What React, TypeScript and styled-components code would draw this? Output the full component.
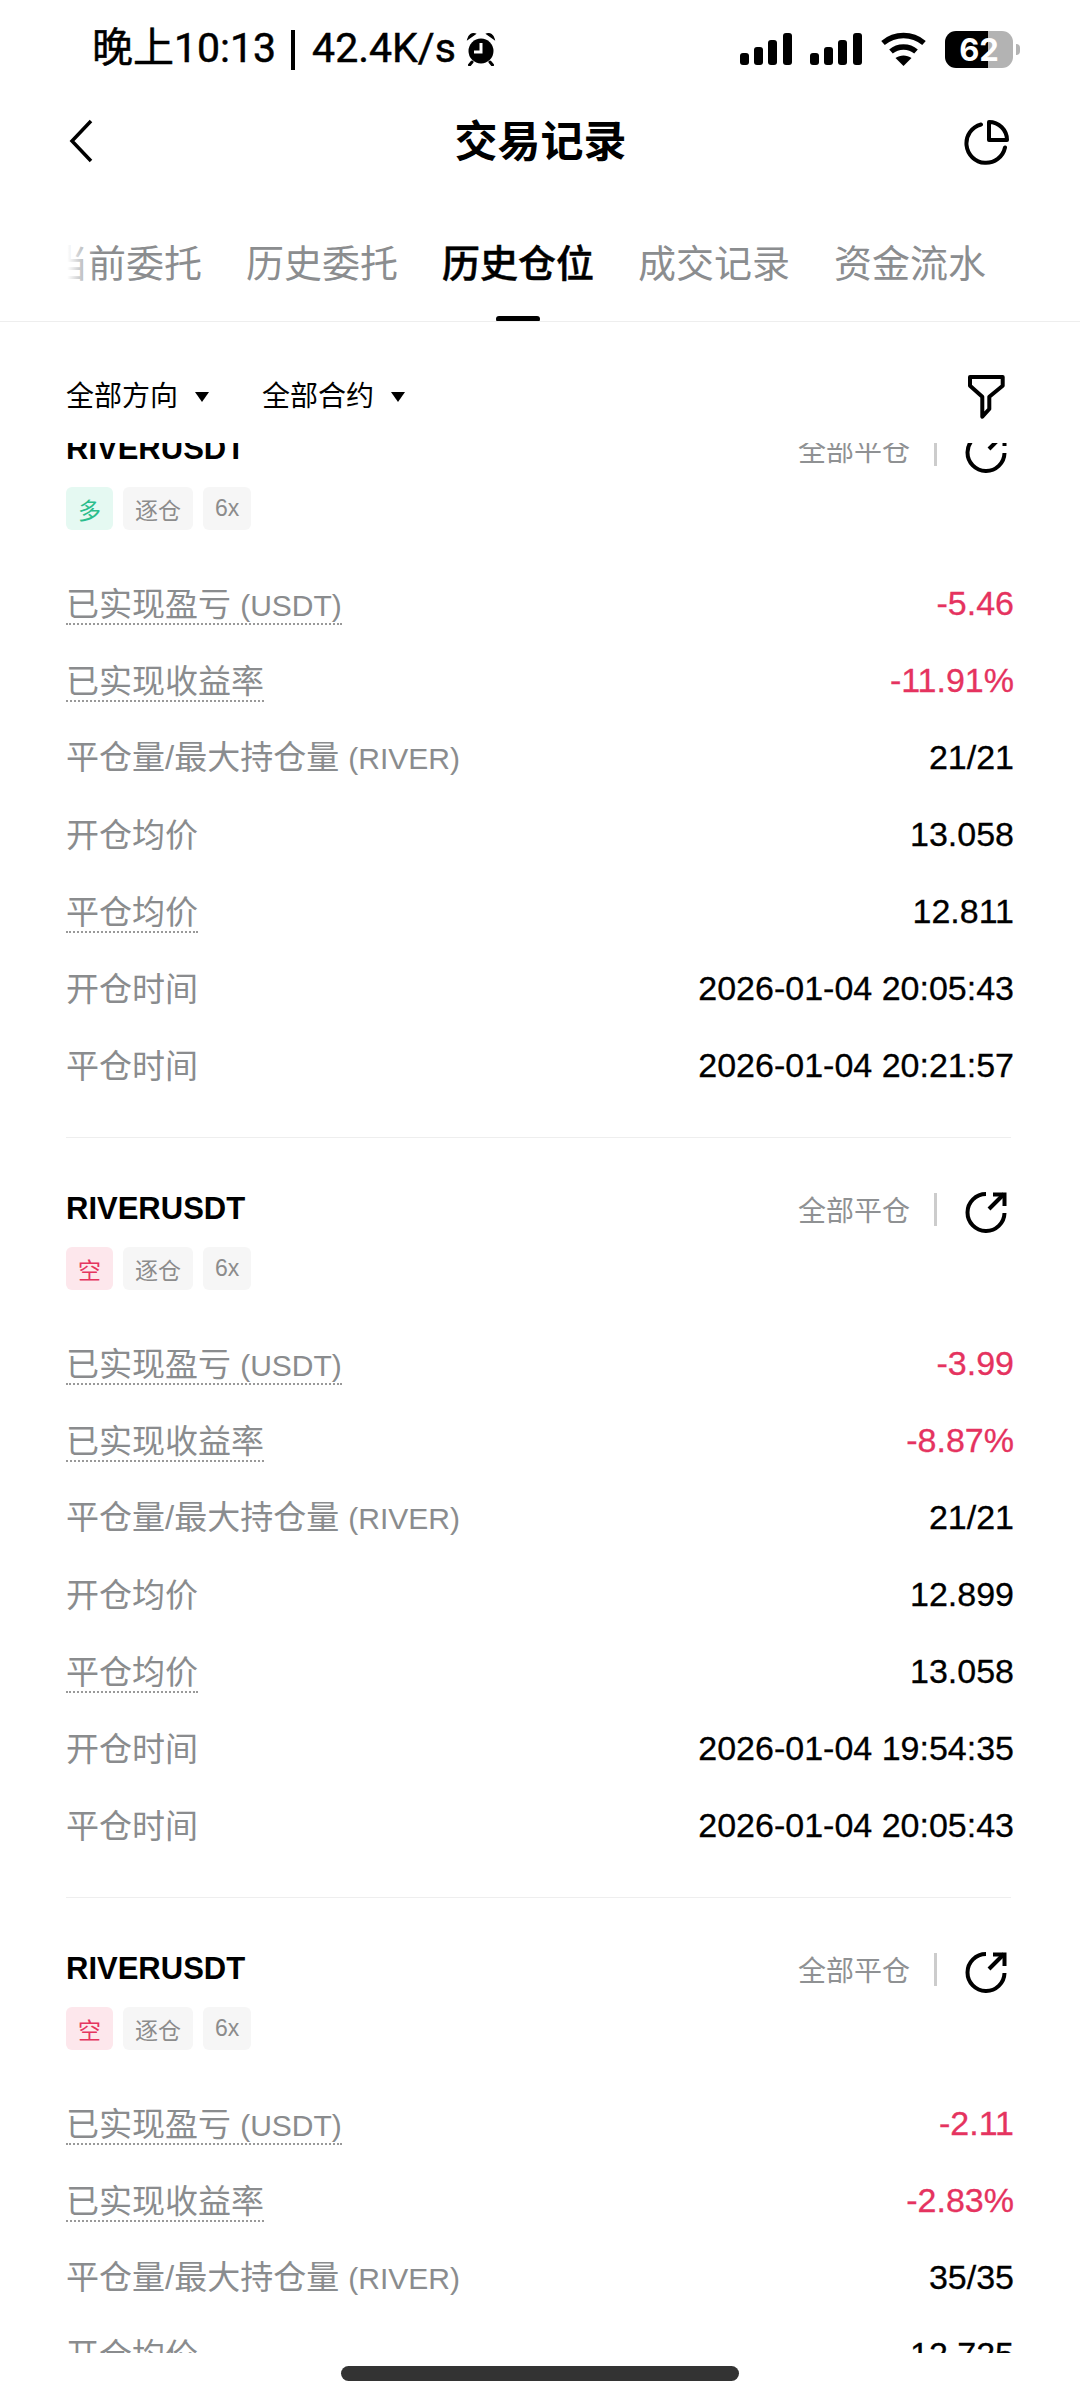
import React from "react";
import styled, { createGlobalStyle } from "styled-components";

const Global = createGlobalStyle`
  html, body { margin: 0; padding: 0; background: #fff; }
  body { font-family: "Liberation Sans", "Noto Sans CJK SC", sans-serif; color: #000; }
  * { box-sizing: border-box; }
`;

const Page = styled.div`
  width: 1080px; height: 2400px; background: #fff; display: flex; flex-direction: column; overflow: hidden;
`;
const StatusBar = styled.div`
  height: 98px; display: flex; align-items: center; justify-content: space-between;
  padding: 0 60px 0 92px; flex: none;
`;
const StatusLeft = styled.div`display: flex; align-items: center; gap: 10px;`;
const StatusText = styled.div`
  display: flex; align-items: center; font-family: Roboto, "Noto Sans CJK SC", sans-serif;
  font-size: 41px; line-height: 48px; font-weight: 400; -webkit-text-stroke: .5px #000; white-space: nowrap; padding-bottom: 2px;
`;
const StatusSep = styled.span`width: 4px; height: 40px; background: #000; margin: 4px 17px 0 15px;`;
const StatusRight = styled.div`display: flex; align-items: center; gap: 18px;`;
const Battery = styled.div`
  width: 68px; height: 37px; border-radius: 11px; display: flex;
  align-items: center; justify-content: center;
  background: linear-gradient(90deg, #000 0 63%, #b3b3b3 63% 100%);
  color: #fff; font-family: Inter, sans-serif; font-weight: 700; font-size: 31px; line-height: 1;
`;
const BatteryWrap = styled.div`display: flex; align-items: center; gap: 3px;`;
const BatteryTip = styled.div`width: 4px; height: 11px; border-radius: 0 4px 4px 0; background: #b3b3b3;`;

const NavBar = styled.div`
  height: 90px; flex: none; display: flex; align-items: center; justify-content: space-between; padding: 0 71px 0 68px;
`;
const NavSide = styled.div<{ $end?: boolean }>`
  width: 46px; display: flex; justify-content: ${p => (p.$end ? "flex-end" : "flex-start")};
  padding-bottom: ${p => (p.$end ? "2px" : "4px")};
`;
const NavTitle = styled.div`font-size: 43px; line-height: 56px; font-weight: 700; padding-bottom: 2px; margin-left: 4px;`;

const Tabs = styled.div`
  position: relative; height: 134px; flex: none; display: flex; gap: 44px; padding: 54px 0 0 50px;
  border-bottom: 1px solid #eeeeee; overflow: hidden;
`;
const Tab = styled.div<{ $active?: boolean }>`
  position: relative; height: 80px; font-size: 38px; line-height: 44px; white-space: nowrap;
  color: ${p => (p.$active ? "#000" : "#8b8d8f")};
  font-weight: ${p => (p.$active ? 500 : 400)};
  -webkit-text-stroke: ${p => (p.$active ? ".5px #000" : "0")};
  ${p => p.$active ? `
    &::after {
      content: ""; position: absolute; left: 54px; bottom: 0; width: 44px; height: 6px; border-radius: 3px; background: #000;
    }` : ""}
`;
const TabFade = styled.div`
  position: absolute; left: 0; top: 0; bottom: 0; width: 96px;
  background: linear-gradient(90deg, #fff 0 70%, rgba(255,255,255,0) 100%);
`;

const FilterBar = styled.div`
  height: 121px; flex: none; display: flex; align-items: center; padding: 28px 74px 0 66px;
`;
const FilterItem = styled.div`
  display: flex; align-items: center; gap: 17px; font-size: 28px; line-height: 1; margin-right: 53px;
`;
const Caret = styled.span`
  width: 0; height: 0; border-left: 7px solid transparent; border-right: 7px solid transparent; border-top: 10px solid #000;
`;
const FilterIcon = styled.div`margin-left: auto; display: flex;`;

const List = styled.div`height: 1910px; flex: none; overflow: hidden;`;
const ListInner = styled.div`margin-top: -66px;`;
const Card = styled.div`
  margin: 0 69px 0 66px; padding: 41px 0 32px; border-top: 1px solid #eeeeee;
`;
const CardHead = styled.div`height: 60px; display: flex; align-items: center;`;
const Symbol = styled.div`font-size: 31px; font-weight: 700;`;
const HeadRight = styled.div`margin-left: auto; display: flex; align-items: center;`;
const CloseText = styled.span`font-size: 28px; color: #8f9193;`;
const HeadDivider = styled.span`width: 3px; height: 33px; background: #cccccc; margin: 0 28px 0 24px;`;
const ShareIconWrap = styled.span`display: flex; margin: 6px 4px 0 0;`;
const TagRow = styled.div`display: flex; gap: 10px; margin-top: 8px; height: 43px;`;
const Tag = styled.span<{ $kind: "long" | "short" | "plain" }>`
  height: 43px; display: flex; align-items: center; justify-content: center; padding: 0 12px; min-width: 46px;
  border-radius: 6px; font-size: 23px;
  background: ${p => (p.$kind === "long" ? "#e5f9f2" : p.$kind === "short" ? "#fde7ec" : "#f6f6f6")};
  color: ${p => (p.$kind === "long" ? "#2bbd8c" : p.$kind === "short" ? "#e5345f" : "#8c8c8c")};
`;
const Rows = styled.div`margin: 36px -3px 0 0;`;
const Row = styled.div`height: 77px; display: flex; align-items: center; justify-content: space-between;`;
const Label = styled.span<{ $dotted?: boolean }>`
  font-size: 33px; line-height: ${p => (p.$dotted ? "36px" : "40px")}; color: #8a8c8e; white-space: nowrap;
  ${p => (p.$dotted ? "border-bottom: 2px dotted #999; height: 38px; margin-top: 2px;" : "")}
`;
const LatinUnit = styled.span`font-size: 30px;`;
const Value = styled.span<{ $red?: boolean }>`
  font-size: 34px; line-height: 40px; padding-bottom: 3px; white-space: nowrap; color: ${p => (p.$red ? "#e5335f" : "#000")};
  -webkit-text-stroke: .3px currentColor;
`;

const HomeArea = styled.div`flex: 1; display: flex; justify-content: center; padding-top: 13px;`;
const HomeBar = styled.div`width: 398px; height: 15px; border-radius: 8px; background: #333;`;

const Signal = () => (
  <svg width="52" height="32" viewBox="0 0 52 32" fill="#000">
    <rect x="0" y="20" width="9" height="12" rx="3" />
    <rect x="14" y="14" width="9" height="18" rx="3" />
    <rect x="28" y="7" width="9" height="25" rx="3" />
    <rect x="43" y="0" width="9" height="32" rx="3" />
  </svg>
);
const Wifi = () => (
  <svg width="47" height="34" viewBox="0 0 47 34" fill="none" stroke="#000" strokeWidth="5.5">
    <path d="M3 11 C15 1 32 1 44 11" />
    <path d="M11 19.5 C18 13.5 29 13.5 36 19.5" />
    <path d="M23.5 34 L15.5 26 C20 22.5 27 22.5 31.5 26 Z" fill="#000" stroke="none" />
  </svg>
);
const Alarm = () => (
  <svg width="30" height="34" viewBox="0 0 30 34">
    <circle cx="15" cy="19" r="12.5" fill="#000" />
    <path d="M2 7 C3 3 6 1 9 2 Z M28 7 C27 3 24 1 21 2 Z" fill="#000" stroke="#000" strokeWidth="1.5" />
    <path d="M6 30 L3.5 33 M24 30 L26.5 33" stroke="#000" strokeWidth="3" strokeLinecap="round" />
    <path d="M15 11 V20 H8" stroke="#fff" strokeWidth="3" fill="none" />
  </svg>
);
const Back = () => (
  <svg width="26" height="44" viewBox="0 0 26 44" fill="none" stroke="#000" strokeWidth="3.5">
    <path d="M23 2 L4 22 L23 42" />
  </svg>
);
const Pie = () => (
  <svg width="46" height="46" viewBox="0 0 46 46" fill="none" stroke="#000" strokeWidth="4" strokeLinecap="round">
    <path d="M18 5.5 A19.5 19.5 0 1 0 42 28.5" />
    <path d="M26 3 A18 18 0 0 1 44 21 H26 Z" strokeLinejoin="round" />
  </svg>
);
const Funnel = () => (
  <svg width="40" height="46" viewBox="0 0 40 46" fill="none" stroke="#000" strokeWidth="4" strokeLinejoin="round">
    <path d="M4 3 H36.7 V11.7 L23.3 22.7 V35 L16.3 42.7 V22.7 L4 11.7 Z" />
  </svg>
);
const Share = () => (
  <svg width="42" height="42" viewBox="0 0 42 42" fill="none" stroke="#000" strokeWidth="4">
    <path d="M21 3 A18.5 18.5 0 1 0 39.5 22" />
    <path d="M24 18 L39 3" />
    <path d="M28 3.5 H39.5 V15" />
  </svg>
);

type Rec = {
  side: "long" | "short"; pnl: string; rate: string;
  qty: string; open: string; close: string; openT: string; closeT: string;
};
const records: Rec[] = [
  { side: "long", pnl: "-5.46", rate: "-11.91%", qty: "21/21", open: "13.058", close: "12.811", openT: "2026-01-04 20:05:43", closeT: "2026-01-04 20:21:57" },
  { side: "short", pnl: "-3.99", rate: "-8.87%", qty: "21/21", open: "12.899", close: "13.058", openT: "2026-01-04 19:54:35", closeT: "2026-01-04 20:05:43" },
  { side: "short", pnl: "-2.11", rate: "-2.83%", qty: "35/35", open: "12.725", close: "12.899", openT: "2026-01-04 19:40:12", closeT: "2026-01-04 19:54:35" },
];

const RecordCard = ({ r }: { r: Rec }) => (
  <Card>
    <CardHead>
      <Symbol>RIVERUSDT</Symbol>
      <HeadRight>
        <CloseText>全部平仓</CloseText>
        <HeadDivider />
        <ShareIconWrap><Share /></ShareIconWrap>
      </HeadRight>
    </CardHead>
    <TagRow>
      <Tag $kind={r.side}>{r.side === "long" ? "多" : "空"}</Tag>
      <Tag $kind="plain">逐仓</Tag>
      <Tag $kind="plain">6x</Tag>
    </TagRow>
    <Rows>
      <Row><Label $dotted>已实现盈亏 <LatinUnit>(USDT)</LatinUnit></Label><Value $red>{r.pnl}</Value></Row>
      <Row><Label $dotted>已实现收益率</Label><Value $red>{r.rate}</Value></Row>
      <Row><Label>平仓量/最大持仓量 <LatinUnit>(RIVER)</LatinUnit></Label><Value>{r.qty}</Value></Row>
      <Row><Label>开仓均价</Label><Value>{r.open}</Value></Row>
      <Row><Label $dotted>平仓均价</Label><Value>{r.close}</Value></Row>
      <Row><Label>开仓时间</Label><Value>{r.openT}</Value></Row>
      <Row><Label>平仓时间</Label><Value>{r.closeT}</Value></Row>
    </Rows>
  </Card>
);

export default function App() {
  return (
    <Page>
      <Global />
      <StatusBar>
        <StatusLeft>
          <StatusText>晚上10:13<StatusSep />42.4K/s</StatusText>
          <Alarm />
        </StatusLeft>
        <StatusRight>
          <Signal />
          <Signal />
          <Wifi />
          <BatteryWrap>
            <Battery>62</Battery>
            <BatteryTip />
          </BatteryWrap>
        </StatusRight>
      </StatusBar>
      <NavBar>
        <NavSide><Back /></NavSide>
        <NavTitle>交易记录</NavTitle>
        <NavSide $end><Pie /></NavSide>
      </NavBar>
      <Tabs>
        <Tab>当前委托</Tab>
        <Tab>历史委托</Tab>
        <Tab $active>历史仓位</Tab>
        <Tab>成交记录</Tab>
        <Tab>资金流水</Tab>
        <TabFade />
      </Tabs>
      <FilterBar>
        <FilterItem>全部方向<Caret /></FilterItem>
        <FilterItem>全部合约<Caret /></FilterItem>
        <FilterIcon><Funnel /></FilterIcon>
      </FilterBar>
      <List>
        <ListInner>
          {records.map((r, i) => <RecordCard key={i} r={r} />)}
        </ListInner>
      </List>
      <HomeArea><HomeBar /></HomeArea>
    </Page>
  );
}
